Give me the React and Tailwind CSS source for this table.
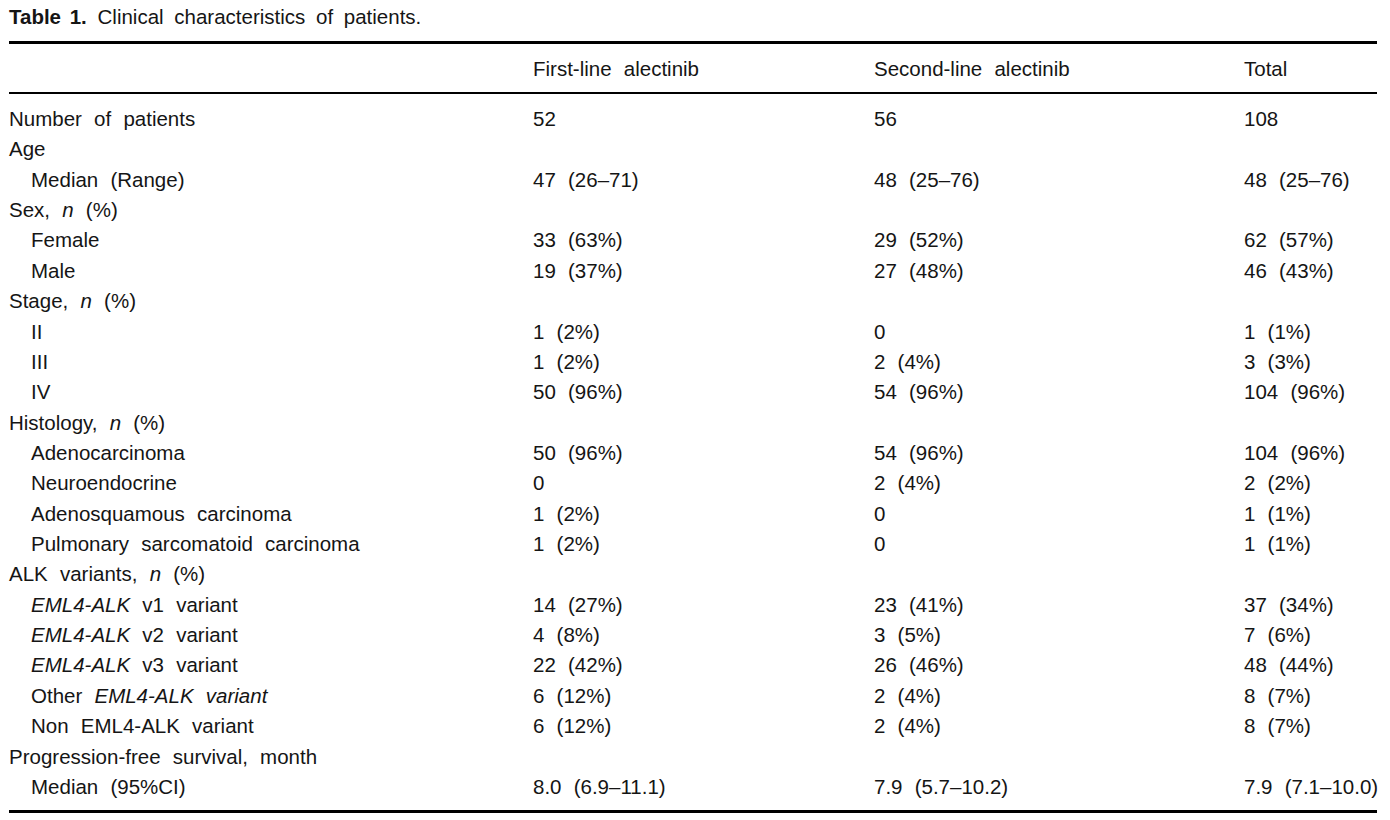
import React from "react";

const rows = [
  { label: "Number of patients", vals: ["52", "56", "108"] },
  { label: "Age" },
  { label: "Median (Range)", indent: true, vals: ["47 (26–71)", "48 (25–76)", "48 (25–76)"] },
  { label: <>Sex, <i>n</i> (%)</> },
  { label: "Female", indent: true, vals: ["33 (63%)", "29 (52%)", "62 (57%)"] },
  { label: "Male", indent: true, vals: ["19 (37%)", "27 (48%)", "46 (43%)"] },
  { label: <>Stage, <i>n</i> (%)</> },
  { label: "II", indent: true, vals: ["1 (2%)", "0", "1 (1%)"] },
  { label: "III", indent: true, vals: ["1 (2%)", "2 (4%)", "3 (3%)"] },
  { label: "IV", indent: true, vals: ["50 (96%)", "54 (96%)", "104 (96%)"] },
  { label: <>Histology, <i>n</i> (%)</> },
  { label: "Adenocarcinoma", indent: true, vals: ["50 (96%)", "54 (96%)", "104 (96%)"] },
  { label: "Neuroendocrine", indent: true, vals: ["0", "2 (4%)", "2 (2%)"] },
  { label: "Adenosquamous carcinoma", indent: true, vals: ["1 (2%)", "0", "1 (1%)"] },
  { label: "Pulmonary sarcomatoid carcinoma", indent: true, vals: ["1 (2%)", "0", "1 (1%)"] },
  { label: <>ALK variants, <i>n</i> (%)</> },
  { label: <><i>EML4-ALK</i> v1 variant</>, indent: true, vals: ["14 (27%)", "23 (41%)", "37 (34%)"] },
  { label: <><i>EML4-ALK</i> v2 variant</>, indent: true, vals: ["4 (8%)", "3 (5%)", "7 (6%)"] },
  { label: <><i>EML4-ALK</i> v3 variant</>, indent: true, vals: ["22 (42%)", "26 (46%)", "48 (44%)"] },
  { label: <>Other <i>EML4-ALK variant</i></>, indent: true, vals: ["6 (12%)", "2 (4%)", "8 (7%)"] },
  { label: "Non EML4-ALK variant", indent: true, vals: ["6 (12%)", "2 (4%)", "8 (7%)"] },
  { label: "Progression-free survival, month" },
  { label: "Median (95%CI)", indent: true, vals: ["8.0 (6.9–11.1)", "7.9 (5.7–10.2)", "7.9 (7.1–10.0)"] },
];

const cols = "grid grid-cols-[524px_341px_370px_1fr]";

export default function App() {
  return (
    <div className="w-[1390px] h-[820px] bg-white text-[#151515] font-['Liberation_Sans',Arial,sans-serif] text-[20.5px] [word-spacing:6.5px] whitespace-nowrap">
      <div className="pl-[9px] pr-[13px]">
        <div className="h-[41px] pt-[5px] leading-[24px] [word-spacing:5px]">
          <b className="[word-spacing:3px]">Table 1.</b> Clinical characteristics of patients.
        </div>
        <div className="border-t-[3px] border-black" />
        <div className={`${cols} h-[48px] pt-[3px] items-center`}>
          <div />
          <div>First-line alectinib</div>
          <div>Second-line alectinib</div>
          <div>Total</div>
        </div>
        <div className="border-t-2 border-black" />
        <div className="pt-[10px] pb-[8px]">
          {rows.map((r, i) => (
            <div key={i} className={`${cols} h-[30.36px] items-center`}>
              <div className={r.indent ? "pl-[22px]" : ""}>{r.label}</div>
              {(r.vals || ["", "", ""]).map((v, j) => (
                <div key={j}>{v}</div>
              ))}
            </div>
          ))}
        </div>
        <div className="border-t-[3px] border-black" />
      </div>
    </div>
  );
}
